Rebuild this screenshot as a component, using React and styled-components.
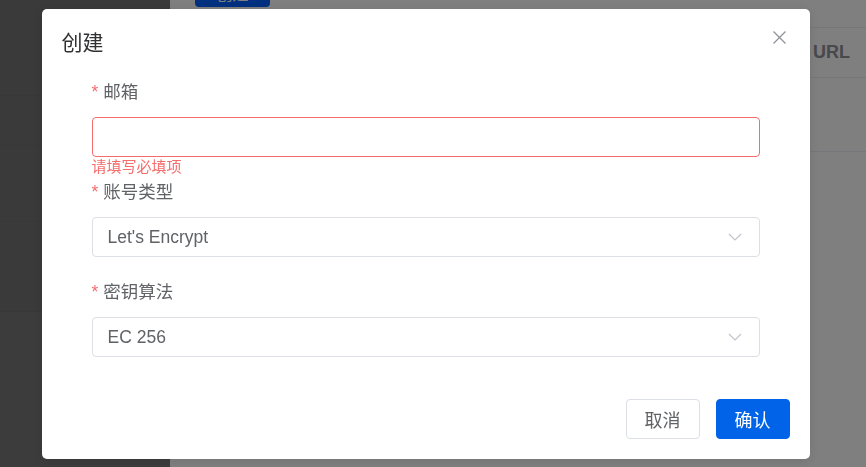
import React from 'react';
import styled, { createGlobalStyle } from 'styled-components';

const GlobalStyle = createGlobalStyle`
  html, body {
    margin: 0;
    padding: 0;
    height: 100%;
    overflow: hidden;
  }
  body {
    font-family: "Liberation Sans", "Noto Sans CJK SC", sans-serif;
    background: #fefefe;
  }
`;

const Layout = styled.div`
  display: flex;
  height: 467px;
`;

const Sidebar = styled.aside`
  width: 170px;
  flex-shrink: 0;
  background: #747474;
  display: flex;
  flex-direction: column;
`;

const SideBlock = styled.div`
  height: ${p => p.h}px;
  border-bottom: 1px solid #707070;
  background: #747474;
`;

const SideRest = styled.div`
  flex: 1;
  background: #787878;
`;

const Main = styled.main`
  flex: 1;
  padding: 0 0 0 25px;
  background: #fefefe;
`;

const Toolbar = styled.div`
  margin-top: -27px;
  height: 34px;
  display: flex;
`;

const PrimaryTop = styled.button`
  width: 75px;
  height: 34px;
  border: none;
  border-radius: 4px;
  background: #0060fe;
  color: #fff;
  font: inherit;
  font-size: 16px;
  line-height: 16px;
  padding-top: 10px;
`;

const Table = styled.div`
  margin-top: 20px;
`;

const Row = styled.div`
  box-sizing: border-box;
  display: grid;
  grid-template-columns: 1fr 1fr 1fr 75px;
  height: ${p => p.h}px;
  align-items: center;
  border-top: 1px solid #ebeef5;
  ${p => p.last && 'border-bottom: 1px solid #ebeef5;'}
`;

const HeadCell = styled.div`
  font-weight: bold;
  font-size: 18px;
  color: #909399;
  padding-left: 22px;
`;

const Overlay = styled.div`
  position: fixed;
  inset: 0;
  background: rgba(0, 0, 0, 0.5);
  display: flex;
  justify-content: center;
  align-items: flex-start;
  padding-right: 15px;
`;

const Dialog = styled.div`
  position: relative;
  margin-top: 9px;
  width: 768px;
  height: 450px;
  background: #fff;
  border-radius: 5px;
  display: flex;
  flex-direction: column;
  box-shadow: 0 2px 12px rgba(0, 0, 0, 0.1);
`;

const Header = styled.div`
  padding: 20px 20px 10px;
`;

const Title = styled.span`
  font-size: 21px;
  line-height: 28px;
  color: #303133;
`;

const Close = styled.button`
  position: absolute;
  top: 21px;
  right: 23px;
  width: 15px;
  height: 15px;
  padding: 0;
  border: none;
  background: none;
  display: flex;
`;

const Body = styled.div`
  flex: 1;
  padding: 9px 50px 0;
`;

const Item = styled.div`
  margin-bottom: 19px;
  position: relative;
`;

const Label = styled.label`
  display: block;
  height: 32px;
  line-height: 32px;
  font-size: 17.5px;
  color: #606266;
  margin-bottom: 9px;

  &::before {
    content: "*";
    color: #f56c6c;
    margin-right: 5px;
  }
`;

const Input = styled.input`
  box-sizing: border-box;
  display: block;
  width: 100%;
  height: 40px;
  border: 1px solid ${p => (p.invalid ? '#f56c6c' : '#dcdfe6')};
  border-radius: 4px;
  padding: 0 15px;
  font: inherit;
  font-size: 17.5px;
  color: #606266;
  outline: none;
`;

const ErrorText = styled.div`
  height: 19px;
  line-height: 19px;
  font-size: 15px;
  color: #f56c6c;
  margin-bottom: -19px;
`;

const Select = styled.div`
  box-sizing: border-box;
  height: 40px;
  border: 1px solid #dcdfe6;
  border-radius: 4px;
  padding: 0 17px 0 15px;
  display: flex;
  align-items: center;
  justify-content: space-between;
  font-size: 17.5px;
  color: #606266;
`;

const Footer = styled.div`
  display: flex;
  justify-content: flex-end;
  gap: 16px;
  padding: 23px 20px 20px;
`;

const Button = styled.button`
  width: 74px;
  height: 40px;
  border-radius: 4px;
  font: inherit;
  font-size: 18px;
  border: 1px solid ${p => (p.primary ? '#0063e8' : '#dcdfe6')};
  background: ${p => (p.primary ? '#0063e8' : '#fff')};
  color: ${p => (p.primary ? '#fff' : '#606266')};
`;

const Chevron = () => (
  <svg width="14" height="8" viewBox="0 0 14 8">
    <path d="M1 1 L7 7 L13 1" fill="none" stroke="#c0c4cc" strokeWidth="1.2" />
  </svg>
);

const CloseIcon = () => (
  <svg width="15" height="15" viewBox="0 0 15 15">
    <path d="M1.5 1.5 L13.5 13.5 M13.5 1.5 L1.5 13.5" stroke="#909399" strokeWidth="1.3" />
  </svg>
);

const App = () => (
  <>
    <GlobalStyle />
    <Layout>
      <Sidebar>
        <SideBlock h={95} />
        <SideBlock h={49} />
        <SideBlock h={75} />
        <SideBlock h={89} />
        <SideRest />
      </Sidebar>
      <Main>
        <Toolbar>
          <PrimaryTop>创建</PrimaryTop>
        </Toolbar>
        <Table>
          <Row h={50}>
            <HeadCell>邮箱</HeadCell>
            <HeadCell>类型</HeadCell>
            <HeadCell>算法</HeadCell>
            <HeadCell>URL</HeadCell>
          </Row>
          <Row h={75} last />
        </Table>
      </Main>
    </Layout>
    <Overlay>
      <Dialog>
        <Header>
          <Title>创建</Title>
        </Header>
        <Close aria-label="关闭"><CloseIcon /></Close>
        <Body>
          <Item>
            <Label>邮箱</Label>
            <Input invalid />
            <ErrorText>请填写必填项</ErrorText>
          </Item>
          <Item>
            <Label>账号类型</Label>
            <Select>
              <span>Let's Encrypt</span>
              <Chevron />
            </Select>
          </Item>
          <Item>
            <Label>密钥算法</Label>
            <Select>
              <span>EC 256</span>
              <Chevron />
            </Select>
          </Item>
        </Body>
        <Footer>
          <Button>取消</Button>
          <Button primary>确认</Button>
        </Footer>
      </Dialog>
    </Overlay>
  </>
);

export default App;
